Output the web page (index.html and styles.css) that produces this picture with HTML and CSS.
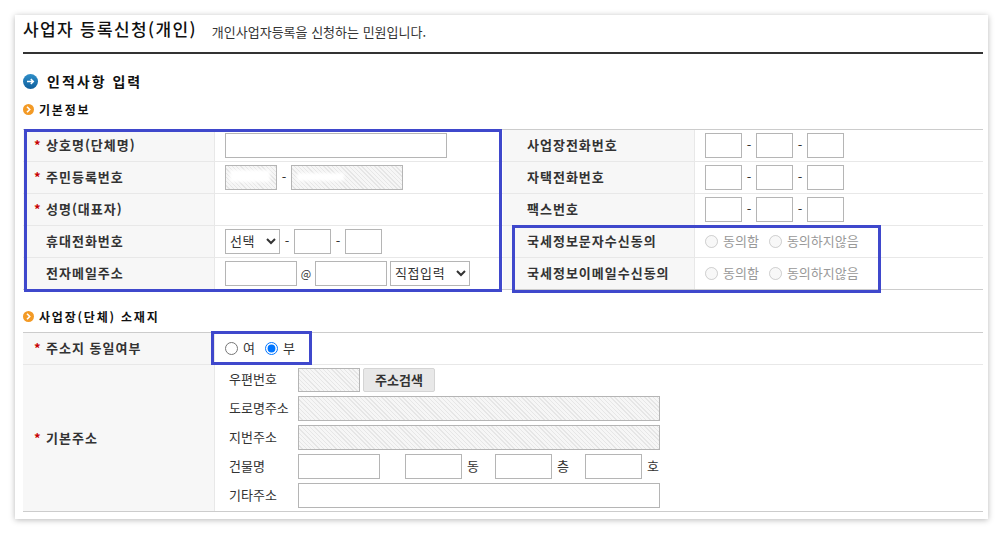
FILE: index.html
```html
<!DOCTYPE html>
<html lang="ko">
    <head>
        <meta charset="utf-8">
        <title>사업자 등록신청(개인)</title>
        <link rel="stylesheet" href="styles.css">
    </head>
    <body>
        <div class="card">

            <div class="page-head">
                <h1>사업자 등록신청(개인)</h1>
                <p>개인사업자등록을 신청하는 민원입니다.</p>
            </div>

            <h2 class="section-title">
                <svg width="15" height="15" viewBox="0 0 15 15"><defs><linearGradient id="blueBall" x1="0" y1="0" x2="0" y2="1"><stop offset="0" stop-color="#2f8fc9"/><stop offset="1" stop-color="#0f5f9c"/></linearGradient></defs><circle cx="7.5" cy="7.5" r="7.5" fill="url(#blueBall)"/><path d="M4 7.5h6M7.8 5l2.5 2.5L7.8 10" fill="none" stroke="#fff" stroke-width="1.5"/></svg>
                인적사항 입력
            </h2>

            <h3 class="sub-title">
                <svg width="11" height="11" viewBox="0 0 11 11"><circle cx="5.5" cy="5.5" r="5.5" fill="#f39a25"/><path d="M4 2.8l2.7 2.7L4 8.2" fill="none" stroke="#fff" stroke-width="1.6"/></svg>
                기본정보
            </h3>

            <table class="form-table">
                <colgroup><col class="col-label"><col class="col-value"><col class="col-label"><col class="col-value"></colgroup>
                <tr>
                    <th><span class="req">*</span>상호명(단체명)</th>
                    <td><input class="w222" type="text"></td>
                    <th><span class="req"></span>사업장전화번호</th>
                    <td><div class="line"><input class="w37" type="text"><i>-</i><input class="w37" type="text"><i>-</i><input class="w37" type="text"></div></td>
                </tr>
                <tr>
                    <th><span class="req">*</span>주민등록번호</th>
                    <td><div class="line">
                        <span class="masked"><input class="w52 hatch" type="text" disabled><b class="blur blur-a"></b></span>
                        <i>-</i>
                        <span class="masked"><input class="w112 hatch" type="text" disabled><b class="blur blur-b"></b></span>
                    </div></td>
                    <th><span class="req"></span>자택전화번호</th>
                    <td><div class="line"><input class="w37" type="text"><i>-</i><input class="w37" type="text"><i>-</i><input class="w37" type="text"></div></td>
                </tr>
                <tr>
                    <th><span class="req">*</span>성명(대표자)</th>
                    <td></td>
                    <th><span class="req"></span>팩스번호</th>
                    <td><div class="line"><input class="w37" type="text"><i>-</i><input class="w37" type="text"><i>-</i><input class="w37" type="text"></div></td>
                </tr>
                <tr>
                    <th><span class="req"></span>휴대전화번호</th>
                    <td><div class="line">
                        <select class="w55"><option>선택</option></select><i>-</i><input class="w37" type="text"><i>-</i><input class="w37" type="text">
                    </div></td>
                    <th><span class="req"></span>국세정보문자수신동의</th>
                    <td><div class="line radios off">
                        <label><input type="radio" disabled><span>동의함</span></label>
                        <label><input type="radio" disabled><span>동의하지않음</span></label>
                    </div></td>
                </tr>
                <tr>
                    <th><span class="req"></span>전자메일주소</th>
                    <td><div class="line">
                        <input class="w72" type="text"><i class="at">@</i><input class="w72" type="text"><select class="w80 after-mail"><option>직접입력</option></select>
                    </div></td>
                    <th><span class="req"></span>국세정보이메일수신동의</th>
                    <td><div class="line radios off">
                        <label><input type="radio" disabled><span>동의함</span></label>
                        <label><input type="radio" disabled><span>동의하지않음</span></label>
                    </div></td>
                </tr>
            </table>

            <h3 class="sub-title second">
                <svg width="11" height="11" viewBox="0 0 11 11"><circle cx="5.5" cy="5.5" r="5.5" fill="#f39a25"/><path d="M4 2.8l2.7 2.7L4 8.2" fill="none" stroke="#fff" stroke-width="1.6"/></svg>
                사업장(단체) 소재지
            </h3>

            <table class="form-table">
                <colgroup><col class="col-label"><col></colgroup>
                <tr>
                    <th><span class="req">*</span>주소지 동일여부</th>
                    <td><div class="line radios">
                        <label><input type="radio" name="same"><span>여</span></label>
                        <label><input type="radio" name="same" checked><span>부</span></label>
                    </div></td>
                </tr>
                <tr>
                    <th><span class="req">*</span>기본주소</th>
                    <td class="addr">
                        <div class="addr-row short">
                            <span class="addr-label">우편번호</span>
                            <input class="w62 hatch" type="text" disabled>
                            <button class="find-btn" type="button">주소검색</button>
                        </div>
                        <div class="addr-row">
                            <span class="addr-label">도로명주소</span>
                            <input class="w362 hatch" type="text" disabled>
                        </div>
                        <div class="addr-row">
                            <span class="addr-label">지번주소</span>
                            <input class="w362 hatch" type="text" disabled>
                        </div>
                        <div class="addr-row">
                            <span class="addr-label">건물명</span>
                            <input class="w82" type="text">
                            <input class="w57 gap-first" type="text"><span class="unit">동</span>
                            <input class="w57" type="text"><span class="unit">층</span>
                            <input class="w57" type="text"><span class="unit">호</span>
                        </div>
                        <div class="addr-row">
                            <span class="addr-label">기타주소</span>
                            <input class="w362" type="text">
                        </div>
                    </td>
                </tr>
            </table>

            <!-- blue marks drawn over the form -->
            <div class="mark mark-person"></div>
            <div class="mark mark-agree"></div>
            <div class="mark mark-same"></div>
        </div>
    </body>
</html>
```

FILE: styles.css
```css
* {
    margin: 0;
    padding: 0;
    box-sizing: border-box;
}

html, body {
    height: 534px;
    overflow: hidden;
    background: #ffffff;
}

body {
    font-family: "Noto Sans CJK KR", "Noto Sans", sans-serif;
    font-size: 13px;
    color: #333333;
    padding: 15px 15px 0;
}

i {
    font-style: normal;
}

input[type="text"] {
    height: 25px;
    border: 1px solid #b5b5b5;
    background: #ffffff;
    display: block;
    border-radius: 0;
}

select {
    height: 25px;
    border: 1px solid #b5b5b5;
    background: #ffffff;
    font-family: inherit;
    font-size: 13px;
    letter-spacing: 0.6px;
    color: #333333;
    padding: 0 0 2px;
    border-radius: 0;
}

.card {
    position: relative;
    width: 973px;
    height: 504px;
    padding: 0 5px 0 8px;
    background: #ffffff;
    box-shadow: 0 1px 6px rgba(0, 0, 0, 0.28);
}

.page-head {
    display: flex;
    align-items: center;
    height: 39px;
    border-bottom: 2px solid #333333;
    padding-bottom: 7px;
}
.page-head h1 {
    font-size: 17px;
    font-weight: 500;
    color: #111111;
    letter-spacing: 1.35px;
    line-height: 30px;
    margin-bottom: 3px;
}
.page-head p {
    font-size: 13px;
    margin-left: 15px;
    padding-top: 3px;
}

.section-title {
    display: flex;
    align-items: center;
    gap: 9px;
    font-size: 14px;
    font-weight: 700;
    color: #111111;
    letter-spacing: 2px;
    height: 20px;
    margin-top: 17px;
}

.sub-title {
    display: flex;
    align-items: center;
    gap: 5px;
    font-size: 12px;
    font-weight: 700;
    color: #111111;
    letter-spacing: 1.8px;
    height: 18px;
    margin-top: 9px;
    margin-bottom: 11px;
}
.sub-title.second {
    margin-top: 17px;
    margin-bottom: 7px;
}

.form-table {
    width: 960px;
    border-collapse: separate;
    border-spacing: 0;
    table-layout: fixed;
    border-top: 1px solid #cccccc;
    border-bottom: 1px solid #cccccc;
}
.col-label {
    width: 192px;
}
.col-value {
    width: 288px;
}
.form-table th {
    height: 32px;
    background: #f7f7f7;
    border-right: 1px solid #e8e8e8;
    border-bottom: 1px solid #e8e8e8;
    text-align: left;
    font-size: 13px;
    font-weight: 700;
    letter-spacing: 1px;
    color: #333333;
    padding: 0 0 2px 11px;
    white-space: nowrap;
}
.form-table td + th {
    padding-left: 12px;
}
.form-table td {
    height: 32px;
    border-bottom: 1px solid #e8e8e8;
    padding: 0 0 0 10px;
}
.form-table tr:last-child th,
.form-table tr:last-child td {
    height: 31px;
    border-bottom: 0;
}

.req {
    display: inline-block;
    width: 12px;
    color: #c80000;
    font-weight: 700;
}

.line {
    display: flex;
    align-items: center;
    height: 25px;
}
.line i {
    width: 14px;
    text-align: center;
    padding-bottom: 2px;
}
.line i.at {
    width: 18px;
    font-size: 11px;
}
.after-mail {
    margin-left: 3px;
}

.radios label {
    display: flex;
    align-items: center;
    margin-right: 10px;
}
.radios label span {
    padding-bottom: 2px;
}
.radios input {
    width: 13px;
    height: 13px;
    margin-right: 5px;
}
.off label {
    color: #999999;
}

.w37 { width: 37px; }
.w52 { width: 52px; }
.w55 { width: 55px; }
.w57 { width: 57px; }
.w62 { width: 62px; }
.w72 { width: 72px; }
.w80 { width: 80px; }
.w82 { width: 82px; }
.w112 { width: 112px; }
.w222 { width: 222px; }
.w362 { width: 362px; }

input.hatch {
    background: repeating-linear-gradient(45deg, #f6f6f6, #f6f6f6 2px, #e6e6e6 2px, #e6e6e6 3px);
}

.masked {
    position: relative;
    display: block;
}
.blur {
    position: absolute;
    background: #ffffff;
    filter: blur(1.5px);
}
.blur-a {
    left: 5px;
    top: 5px;
    width: 40px;
    height: 12px;
}
.blur-b {
    left: 6px;
    top: 8px;
    width: 47px;
    height: 8px;
}

.form-table td.addr {
    padding: 3px 0 3px 14px;
}
.addr-row {
    display: flex;
    align-items: center;
    height: 25px;
    margin-bottom: 4px;
}
.addr-row:last-child {
    margin-bottom: 0;
}
.addr-row.short {
    height: 24px;
}
.addr-row.short input {
    height: 24px;
}
.addr-label {
    width: 69px;
    padding-bottom: 3px;
}
.find-btn {
    width: 72px;
    height: 24px;
    margin-left: 3px;
    background: #e8e8e8;
    border: 1px solid #d4d4d4;
    border-radius: 2px;
    font-family: inherit;
    font-size: 13px;
    font-weight: 700;
    padding-bottom: 2px;
    color: #333333;
}
.gap-first {
    margin-left: 25px;
}
.unit {
    width: 33px;
    padding: 0 0 3px 5px;
}

.mark {
    position: absolute;
    border: 3px solid #3f48cc;
}
.mark-person {
    left: 9px;
    top: 114px;
    width: 478px;
    height: 163px;
}
.mark-agree {
    left: 497px;
    top: 210px;
    width: 369px;
    height: 68px;
}
.mark-same {
    left: 196px;
    top: 316px;
    width: 101px;
    height: 34px;
}
```
